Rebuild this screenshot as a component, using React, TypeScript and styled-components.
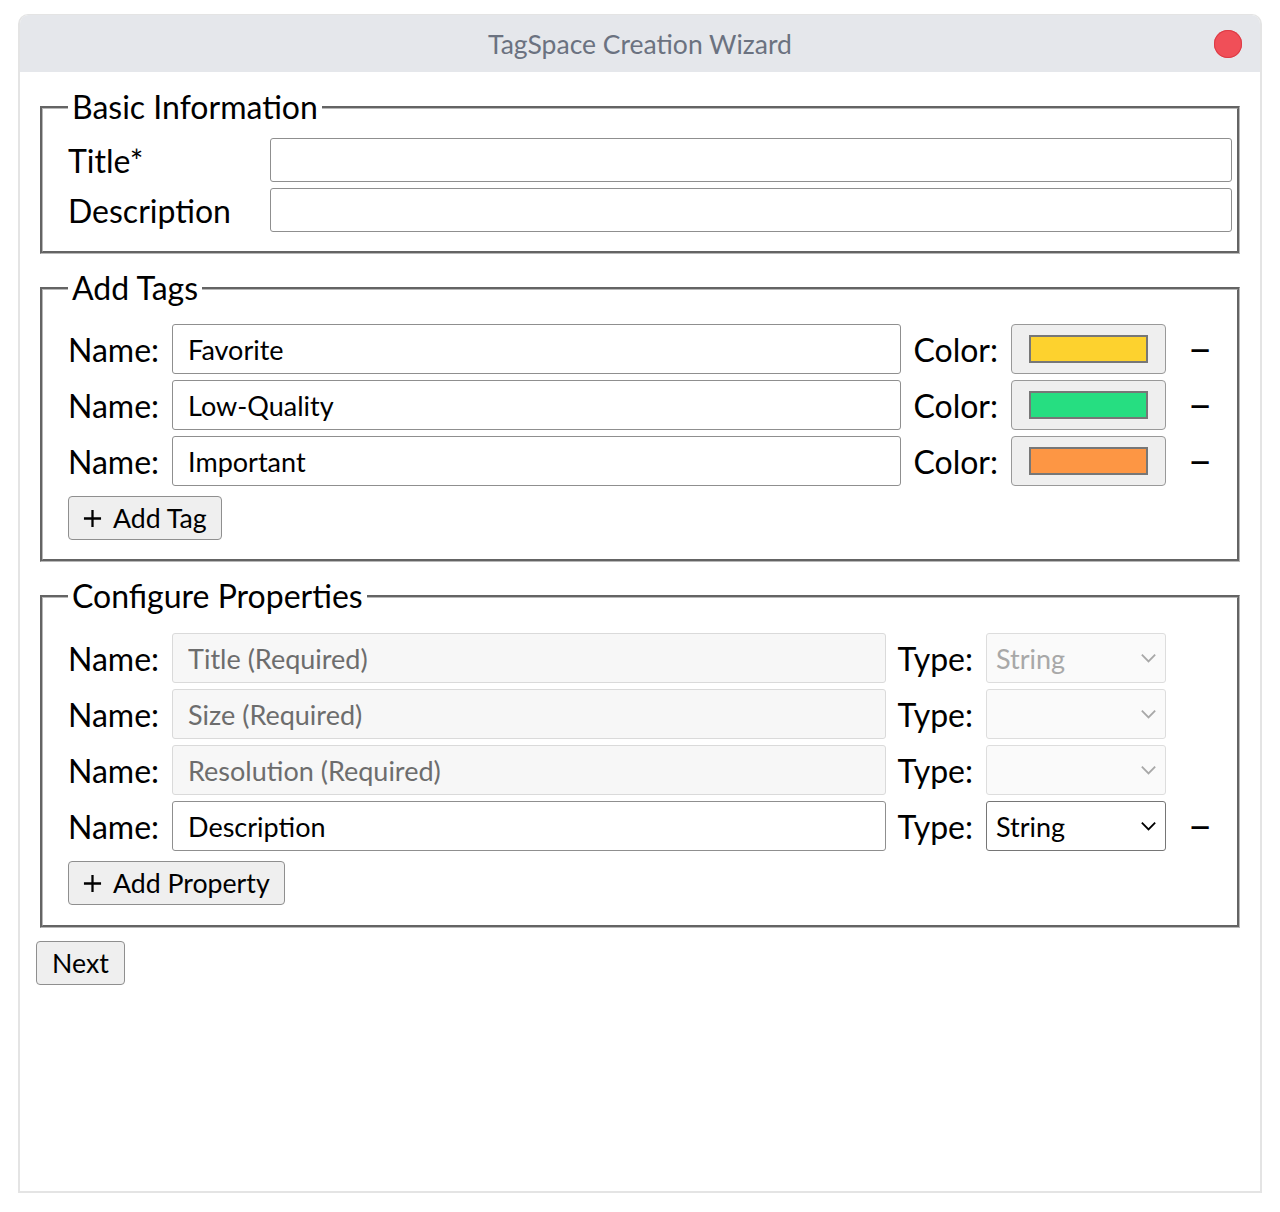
import React, { useState } from "react";
import styled, { createGlobalStyle } from "styled-components";

type Tag = { id: number; name: string; color: string };
type Property = { id: number; name: string; type: string; locked: boolean };

const initialTags: Tag[] = [
  { id: 1, name: "Favorite", color: "#fdd22e" },
  { id: 2, name: "Low-Quality", color: "#26de81" },
  { id: 3, name: "Important", color: "#fd9644" },
];

const initialProps: Property[] = [
  { id: 1, name: "Title (Required)", type: "String", locked: true },
  { id: 2, name: "Size (Required)", type: "", locked: true },
  { id: 3, name: "Resolution (Required)", type: "", locked: true },
  { id: 4, name: "Description", type: "String", locked: false },
];

const App: React.FC = () => {
  const [tags, setTags] = useState<Tag[]>(initialTags);
  const [props, setProps] = useState<Property[]>(initialProps);

  const addTag = () =>
    setTags((prev) => [...prev, { id: Date.now(), name: "", color: "#cccccc" }]);
  const removeTag = (id: number) => setTags((prev) => prev.filter((t) => t.id !== id));

  const addProperty = () =>
    setProps((prev) => [...prev, { id: Date.now(), name: "", type: "String", locked: false }]);
  const removeProperty = (id: number) => setProps((prev) => prev.filter((p) => p.id !== id));

  return (
    <>
      <GlobalStyle />
      <Window>
        <TitleBar>
          <WindowTitle>TagSpace Creation Wizard</WindowTitle>
          <CloseDot />
        </TitleBar>
        <Body>
          <Section $top={13} $right={5} $bottom={19}>
            <Legend>Basic Information</Legend>
            <InfoGrid>
              <Label>Title*</Label>
              <InfoInput />
              <Label>Description</Label>
              <InfoInput />
            </InfoGrid>
          </Section>

          <Section $top={18} $right={25} $bottom={19}>
            <Legend>Add Tags</Legend>
            <RowList>
              {tags.map((tag) => (
                <Row key={tag.id}>
                  <Label>Name:</Label>
                  <TextInput defaultValue={tag.name} />
                  <Label>Color:</Label>
                  <ColorBox>
                    <Swatch style={{ background: tag.color }} />
                  </ColorBox>
                  <MinusButton onClick={() => removeTag(tag.id)}>−</MinusButton>
                </Row>
              ))}
            </RowList>
            <AddButton onClick={addTag}>
              <PlusIcon />
              Add Tag
            </AddButton>
          </Section>

          <Section $top={19} $right={25} $bottom={20}>
            <Legend>Configure Properties</Legend>
            <RowList>
              {props.map((p) => (
                <Row key={p.id}>
                  <Label>Name:</Label>
                  <TextInput defaultValue={p.name} disabled={p.locked} />
                  <Label>Type:</Label>
                  <SelectWrap>
                    <Select defaultValue={p.type} disabled={p.locked}>
                      <option value=""></option>
                      <option value="String">String</option>
                      <option value="Number">Number</option>
                      <option value="Date">Date</option>
                    </Select>
                    <Chevron viewBox="0 0 20 12" $disabled={p.locked}>
                      <path d="M2 2 L10 10 L18 2" />
                    </Chevron>
                  </SelectWrap>
                  {p.locked ? (
                    <MinusSlot />
                  ) : (
                    <MinusButton onClick={() => removeProperty(p.id)}>−</MinusButton>
                  )}
                </Row>
              ))}
            </RowList>
            <AddButton onClick={addProperty}>
              <PlusIcon />
              Add Property
            </AddButton>
          </Section>

          <NextButton>Next</NextButton>
        </Body>
      </Window>
    </>
  );
};

const PlusIcon: React.FC = () => (
  <PlusSvg viewBox="0 0 20 20">
    <path d="M10 1 V19 M1 10 H19" />
  </PlusSvg>
);

const GlobalStyle = createGlobalStyle`
  html, body {
    margin: 0;
    padding: 0;
    background: #ffffff;
    font-family: Lato, "Open Sans", sans-serif;
  }
`;

const Window = styled.div`
  box-sizing: border-box;
  margin: 14px 18px 0 18px;
  height: 1179px;
  border: 2px solid #e4e4e4;
  border-top: 1px solid #e4e4e4;
  border-radius: 10px 10px 0 0;
  overflow: hidden;
  display: flex;
  flex-direction: column;
`;

const TitleBar = styled.div`
  position: relative;
  height: 57px;
  background: #e5e7eb;
  display: flex;
  align-items: center;
  justify-content: center;
`;

const WindowTitle = styled.div`
  font-size: 26.5px;
  color: #6b7280;
`;

const CloseDot = styled.span`
  position: absolute;
  right: 18px;
  top: 15px;
  width: 28px;
  height: 28px;
  border-radius: 50%;
  background: #f04f58;
  box-shadow: inset 0 0 0 1px #dc3c46;
`;

const Body = styled.div`
  padding: 17px 16px 0 16px;
  display: flex;
  flex-direction: column;
  align-items: flex-start;
  gap: 16px;
`;

const Section = styled.fieldset<{ $top: number; $right: number; $bottom: number }>`
  box-sizing: border-box;
  align-self: stretch;
  margin: 0 4px;
  padding: ${(p) => p.$top}px ${(p) => p.$right}px ${(p) => p.$bottom}px 25px;
  border: 3px groove #b8b8b8;
  min-width: 0;
`;

const Legend = styled.legend`
  padding: 0 4px;
  font-size: 32px;
  line-height: 36px;
  color: #000;
`;

const Label = styled.span`
  font-size: 32px;
  color: #000;
  white-space: nowrap;
`;

const InfoGrid = styled.div`
  display: grid;
  grid-template-columns: 202px 1fr;
  row-gap: 6px;
  align-items: center;
`;

const InfoInput = styled.input`
  box-sizing: border-box;
  height: 44px;
  width: 100%;
  border: 1px solid #8f8f8f;
  border-radius: 3px;
  font-family: inherit;
  font-size: 27px;
  padding: 0 16px;
`;

const RowList = styled.div`
  display: flex;
  flex-direction: column;
  gap: 6px;
  margin-bottom: 10px;
`;

const Row = styled.div`
  display: flex;
  align-items: center;
  gap: 12px;
  height: 50px;
`;

const TextInput = styled.input`
  box-sizing: border-box;
  flex: 1;
  min-width: 0;
  height: 50px;
  margin-left: 1px;
  border: 1px solid #8f8f8f;
  border-radius: 3px;
  font-family: inherit;
  font-size: 27px;
  color: #000;
  padding: 0 15px;
  background: #fff;

  &:disabled {
    background: #f7f7f7;
    border-color: #dadada;
    color: #6d6d6d;
  }
`;

const ColorBox = styled.div`
  box-sizing: border-box;
  width: 155px;
  height: 50px;
  margin-left: 1px;
  background: #efefef;
  border: 1px solid #999;
  border-radius: 4px;
  display: flex;
  align-items: center;
  justify-content: center;
`;

const Swatch = styled.span`
  box-sizing: border-box;
  width: 119px;
  height: 28px;
  border: 2px solid #777;
`;

const MinusButton = styled.button`
  width: 24px;
  margin-left: 10px;
  padding: 0;
  border: none;
  background: none;
  font-family: inherit;
  font-size: 40px;
  line-height: 1;
  color: #000;
  cursor: pointer;
`;

const MinusSlot = styled.span`
  width: 24px;
  margin-left: 10px;
`;

const SelectWrap = styled.div`
  position: relative;
  width: 180px;
  height: 50px;
  margin-left: 1px;
`;

const Select = styled.select`
  box-sizing: border-box;
  width: 100%;
  height: 100%;
  appearance: none;
  border: 1px solid #767676;
  border-radius: 3px;
  background: #fff;
  font-family: inherit;
  font-size: 27px;
  color: #000;
  padding: 0 9px;

  &:disabled {
    background: #fafafa;
    border-color: #dddddd;
    color: #a8a8a8;
    opacity: 1;
  }
`;

const Chevron = styled.svg<{ $disabled: boolean }>`
  position: absolute;
  right: 9px;
  top: 20px;
  width: 17px;
  height: 10px;
  pointer-events: none;
  fill: none;
  stroke: ${(p) => (p.$disabled ? "#a8a8a8" : "#000")};
  stroke-width: 2.2;
`;

const PlusSvg = styled.svg`
  width: 19px;
  height: 19px;
  fill: none;
  stroke: #000;
  stroke-width: 2.4;
  margin-right: 11px;
`;

const AddButton = styled.button`
  box-sizing: border-box;
  height: 44px;
  display: inline-flex;
  align-items: center;
  padding: 0 14px;
  background: #efefef;
  border: 1px solid #8f8f8f;
  border-radius: 4px;
  font-family: inherit;
  font-size: 26.7px;
  color: #000;
`;

const NextButton = styled(AddButton)`
  margin-top: -3px;
  padding: 0 15px;
`;

export default App;
